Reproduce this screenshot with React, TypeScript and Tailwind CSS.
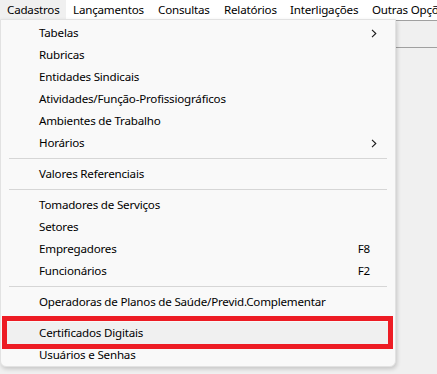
import React from "react";

type Item =
  | { kind: "item"; label: string; shortcut?: string; submenu?: boolean; selected?: boolean }
  | { kind: "sep" };

const topMenus = [
  { label: "Cadastros", w: "w-[66px]", active: true },
  { label: "Lançamentos", w: "w-[85px]" },
  { label: "Consultas", w: "w-[66px]" },
  { label: "Relatórios", w: "w-[66px]" },
  { label: "Interligações", w: "w-[82px]" },
  { label: "Outras Opções", w: "w-[90px]" },
];

const items: Item[] = [
  { kind: "item", label: "Tabelas", submenu: true },
  { kind: "item", label: "Rubricas" },
  { kind: "item", label: "Entidades Sindicais" },
  { kind: "item", label: "Atividades/Função-Profissiográficos" },
  { kind: "item", label: "Ambientes de Trabalho" },
  { kind: "item", label: "Horários", submenu: true },
  { kind: "sep" },
  { kind: "item", label: "Valores Referenciais" },
  { kind: "sep" },
  { kind: "item", label: "Tomadores de Serviços" },
  { kind: "item", label: "Setores" },
  { kind: "item", label: "Empregadores", shortcut: "F8" },
  { kind: "item", label: "Funcionários", shortcut: "F2" },
  { kind: "sep" },
  { kind: "item", label: "Operadoras de Planos de Saúde/Previd.Complementar" },
  { kind: "sep" },
  { kind: "item", label: "Certificados Digitais", selected: true },
  { kind: "item", label: "Usuários e Senhas" },
];

function Chevron() {
  return (
    <svg width="6" height="9" viewBox="0 0 6 9" className="text-[#1a1a1a]">
      <path d="M1 0.8 L4.8 4.5 L1 8.2" fill="none" stroke="currentColor" strokeWidth="1.1" />
    </svg>
  );
}

export default function App() {
  return (
    <div className="relative h-[374px] w-[437px] overflow-hidden bg-[#f0f0f0] font-['Segoe_UI','Noto_Sans',sans-serif] text-[11.6px] tracking-[-0.2px] text-[#000]">
      {/* Menu bar */}
      <div className="flex h-[20px] items-center overflow-hidden whitespace-nowrap bg-white">
        {topMenus.map((m) => (
          <div
            key={m.label}
            className={`flex h-[20px] shrink-0 items-center pl-[7px] ${m.w} ${m.active ? "bg-[#f0f0f0]" : ""}`}
          >
            {m.label}
          </div>
        ))}
      </div>

      {/* Toolbar strip behind the menu */}
      <div className="h-[28px] border-t border-b border-[#a0a0a0] bg-[#f0f0f0]" />

      {/* Dropdown */}
      <div className="absolute left-0 top-[19px] w-[396px] rounded-b-[6px] border border-[#e2e2e2] bg-[#f9f9f9] pt-[2px] shadow-[1px_2px_4px_rgba(0,0,0,0.18)]">
        {items.map((it, i) =>
          it.kind === "sep" ? (
            <div key={i} className="flex h-[9px] items-center px-[8px]">
              <div className="h-px w-full bg-[#d6d6d6]" />
            </div>
          ) : (
            <div
              key={i}
              className={`mx-[4px] flex h-[22px] items-center rounded-[4px] pl-[34px] pr-[14px] ${it.selected ? "bg-[#f0f0f0]" : ""}`}
            >
              <span className="flex-1 whitespace-nowrap">{it.label}</span>
              {it.shortcut && <span className="mr-[7px]">{it.shortcut}</span>}
              {it.submenu && <Chevron />}
            </div>
          )
        )}
      </div>

      {/* Red highlight box */}
      <div className="absolute left-[2px] top-[316px] h-[33px] w-[391px] border-[5px] border-[#ed1c24]" />
    </div>
  );
}
